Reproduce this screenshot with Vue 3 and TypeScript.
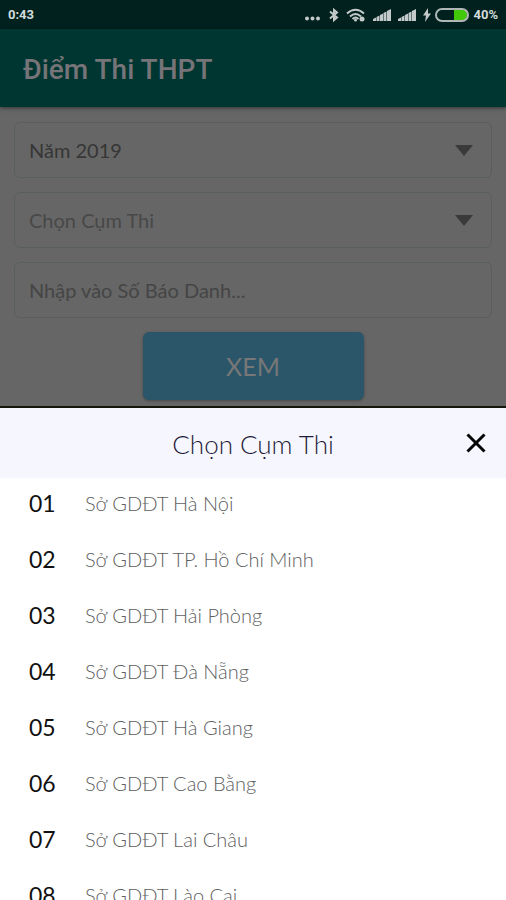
<script setup lang="ts">
import { ref } from 'vue'

interface Cluster {
  code: string
  name: string
}

const clusters: Cluster[] = [
  { code: '01', name: 'Sở GDĐT Hà Nội' },
  { code: '02', name: 'Sở GDĐT TP. Hồ Chí Minh' },
  { code: '03', name: 'Sở GDĐT Hải Phòng' },
  { code: '04', name: 'Sở GDĐT Đà Nẵng' },
  { code: '05', name: 'Sở GDĐT Hà Giang' },
  { code: '06', name: 'Sở GDĐT Cao Bằng' },
  { code: '07', name: 'Sở GDĐT Lai Châu' },
  { code: '08', name: 'Sở GDĐT Lào Cai' },
]

const year = ref('2019')
const cluster = ref('')
const candidate = ref('')
const sheetOpen = ref(true)

function choose(item: Cluster) {
  cluster.value = item.code
  sheetOpen.value = false
}
</script>

<template>
  <div class="screen">
    <div class="status">
      <span>0:43</span>
      <div class="indicators">
        <svg class="dots" width="18" height="16" viewBox="0 0 18 16" aria-hidden="true">
          <circle cx="3" cy="11.500" r="2" /><circle cx="8.500" cy="11.500" r="2" /><circle cx="14" cy="11.500" r="2" />
        </svg>
        <svg class="bluetooth" width="10" height="16" viewBox="0 0 10 16" aria-hidden="true">
          <path d="M1 4.500 8 10.500 5 13V3l3 2.500L1 11.500" />
        </svg>
        <svg class="wifi" width="20" height="16" viewBox="0 0 20 16" aria-hidden="true">
          <path d="M1 6.500Q9.500-1 18 6.500M4 9.500q5.500-5 11 0M6.500 12q3-3 6 0" />
          <circle cx="9.500" cy="13" r="1.500" /><circle cx="16" cy="12" r="2.500" />
        </svg>
        <svg v-for="n in 2" :key="n" class="signal" width="18" height="16" viewBox="0 0 18 16" aria-hidden="true">
          <path d="M0 14v-2l3-1.500V14zM3.500 14v-4l3-1.500V14zM7 14V8l3-1.500V14zM10.500 14V6l3-1.500V14zM14 14V4l4-2v12z" />
        </svg>
        <svg class="bolt" width="8" height="16" viewBox="0 0 8 16" aria-hidden="true">
          <path d="M5 1 0 8.500h3L2 15l6-8.500H5z" />
        </svg>
        <svg class="battery" width="36" height="16" viewBox="0 0 36 16" aria-hidden="true">
          <path class="charge" d="M20 3h9q4 0 4 5t-4 5h-9z" />
          <rect x="2" y="2" width="32" height="12" rx="6" />
        </svg>
        <span>40%</span>
      </div>
    </div>

    <header class="app-bar">
      <h1>Điểm Thi THPT</h1>
    </header>

    <form class="search" @submit.prevent>
      <div class="picker">
        <select v-model="year" class="field" aria-label="Năm">
          <option value="2019">Năm 2019</option>
        </select>
        <svg class="caret" width="18" height="11" viewBox="0 0 18 11" aria-hidden="true"><path d="M0 0h18L9 11z" /></svg>
      </div>
      <div class="picker">
        <select v-model="cluster" class="field muted" aria-label="Chọn Cụm Thi" @click="sheetOpen = true">
          <option value="">Chọn Cụm Thi</option>
          <option v-for="item in clusters" :key="item.code" :value="item.code">{{ item.name }}</option>
        </select>
        <svg class="caret" width="18" height="11" viewBox="0 0 18 11" aria-hidden="true"><path d="M0 0h18L9 11z" /></svg>
      </div>
      <input v-model="candidate" class="field" type="text" aria-label="Số Báo Danh" placeholder="Nhập vào Số Báo Danh..." />
      <button class="submit" type="submit">XEM</button>
    </form>

    <section v-if="sheetOpen" class="sheet">
      <header class="sheet-head">
        <h2>Chọn Cụm Thi</h2>
        <button class="close" type="button" aria-label="Đóng" @click="sheetOpen = false">
          <svg width="20" height="20" viewBox="0 0 20 20" aria-hidden="true"><path d="m1.500 1.500 17 17m0-17-17 17" /></svg>
        </button>
      </header>
      <ul class="list">
        <li v-for="item in clusters" :key="item.code">
          <button class="row" type="button" @click="choose(item)">
            <span class="code">{{ item.code }}</span>
            <span class="name">{{ item.name }}</span>
          </button>
        </li>
      </ul>
    </section>
  </div>
</template>

<style>
body {
  margin: 0;
  background: #666;
}
</style>

<style scoped>
.screen {
  display: flex;
  flex-direction: column;
  height: 100vh;
  overflow: hidden;
  background: #666;
  font-family: Lato, "Noto Sans", sans-serif;
}

.screen *,
.screen {
  box-sizing: border-box;
}

h1,
h2 {
  margin: 0;
}

button,
select,
input {
  margin: 0;
  font-family: inherit;
}

.status {
  display: flex;
  flex: none;
  align-items: center;
  justify-content: space-between;
  height: 29px;
  padding: 0 8px;
  background: #00211e;
  color: #d4dcdb;
  font-family: Roboto, sans-serif;
  font-size: 13px;
  font-weight: 700;
}

.indicators {
  display: flex;
  align-items: center;
  gap: 7px;
}

.indicators svg {
  fill: #c3cac9;
}

.indicators .bluetooth,
.indicators .wifi path {
  fill: none;
  stroke: #c3cac9;
  stroke-width: 2;
}

.indicators .battery {
  margin: 0 -4px;
}

.battery rect {
  fill: none;
  stroke: #b0b8b7;
  stroke-width: 2;
}

.battery .charge {
  fill: #43c70b;
}

.app-bar {
  display: flex;
  flex: none;
  align-items: center;
  height: 78px;
  padding: 2px 23px 0;
  background: #003631;
  box-shadow: 0 1px 4px rgb(0 0 0 / 50%);
}

.app-bar h1 {
  color: #767478;
  font-family: Roboto, sans-serif;
  font-size: 28px;
  font-weight: 500;
}

.search {
  display: flex;
  flex: none;
  flex-direction: column;
  gap: 14px;
  padding: 15px 14px 6px;
}

.picker {
  display: grid;
  align-items: center;
}

.picker > * {
  grid-area: 1 / 1;
}

.caret {
  justify-self: end;
  margin-right: 19px;
  fill: #3a3a3a;
  pointer-events: none;
}

.field {
  width: 100%;
  height: 56px;
  padding: 0 14px;
  border: 1px solid #585e5f;
  border-radius: 6px;
  outline: 0;
  appearance: none;
  background: transparent;
  color: #363636;
  font-size: 20px;
}

.field.muted {
  color: #484848;
}

.field::placeholder {
  color: #454545;
  opacity: 1;
}

.submit {
  align-self: center;
  width: 221px;
  height: 68px;
  border: 0;
  border-radius: 6px;
  background: #2b566a;
  box-shadow: 0 1px 3px rgb(0 0 0 / 30%);
  color: #777;
  font-size: 25px;
}

.sheet {
  display: flex;
  flex: 1;
  flex-direction: column;
  min-height: 0;
  border-top: 2px solid #16160c;
  background: #fff;
}

.sheet-head {
  display: grid;
  flex: none;
  grid-template-columns: 60px 1fr 60px;
  align-items: center;
  height: 70px;
  background: #f6f7fe;
}

.sheet-head h2 {
  grid-column: 2;
  padding-top: 2px;
  color: #1f1b3a;
  font-size: 26px;
  font-weight: 300;
  text-align: center;
}

.close {
  display: grid;
  place-items: center;
  height: 60px;
  padding: 0;
  border: 0;
  background: none;
}

.close path {
  fill: none;
  stroke: #050505;
  stroke-width: 3;
}

.list {
  display: flex;
  flex: 1;
  flex-direction: column;
  gap: 6px;
  min-height: 0;
  margin: 0;
  padding: 0;
  overflow: hidden auto;
  list-style: none;
  scrollbar-width: none;
}

.row {
  display: grid;
  grid-template-columns: 56px 1fr;
  align-items: center;
  width: 100%;
  height: 50px;
  padding: 0 29px;
  border: 0;
  background: none;
  text-align: left;
}

.code {
  color: #111;
  font-size: 23px;
}

.name {
  color: #606060;
  font-size: 20px;
  font-weight: 300;
}
</style>
